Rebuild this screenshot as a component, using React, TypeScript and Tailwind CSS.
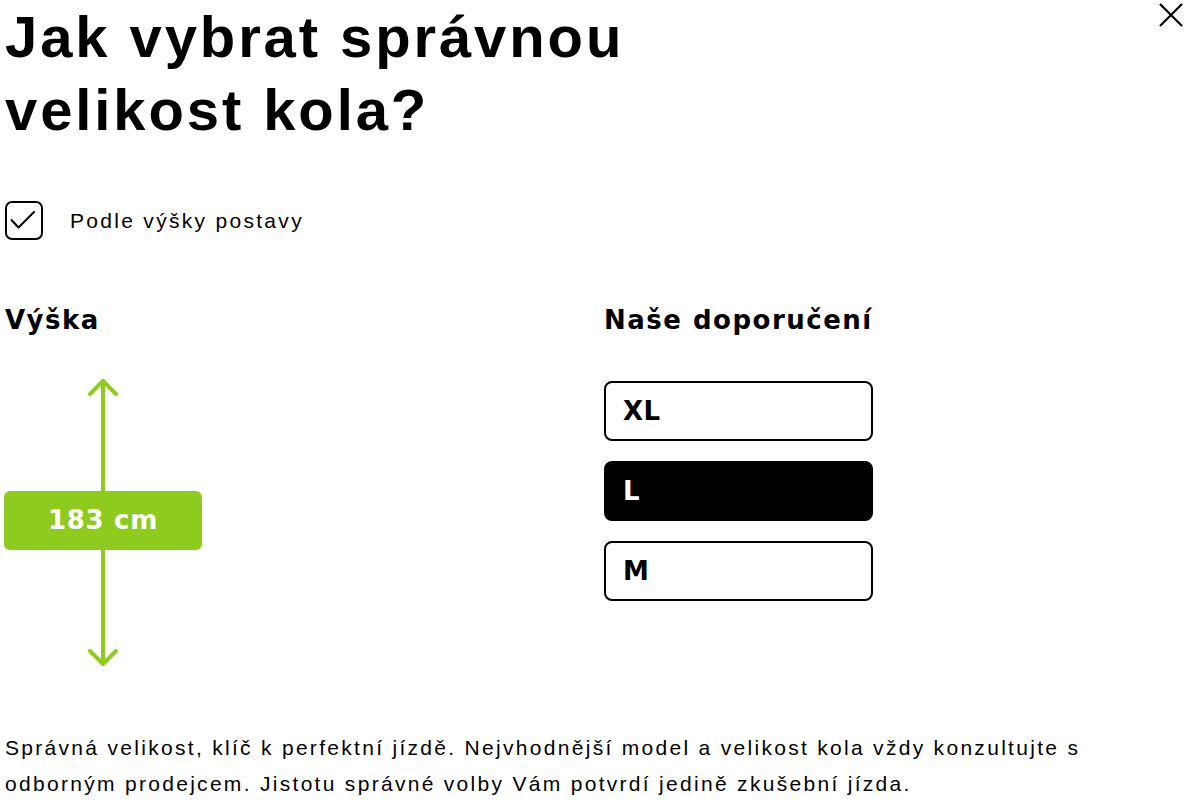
import React from "react";

export default function App() {
  const sizes = [
    { label: "XL", active: false },
    { label: "L", active: true },
    { label: "M", active: false },
  ];
  return (
    <div className="relative w-[1185px] h-[801px] overflow-hidden bg-white text-black font-['Liberation_Sans',sans-serif]">
      <button className="absolute right-[2px] top-[3px] w-[24px] h-[24px]" aria-label="Zavřít">
        <svg viewBox="0 0 24 24" width="24" height="24" fill="none" stroke="#000" strokeWidth="2.2">
          <path d="M1 1 L23 23 M23 1 L1 23" />
        </svg>
      </button>

      <div className="pl-[5px]">
        <h1 className="text-[58px] leading-[73px] font-bold tracking-[2.9px]">
          Jak vybrat správnou
          <br />
          velikost kola?
        </h1>

        <div className="mt-[55px] flex items-center">
          <div className="w-[38px] h-[39px] rounded-[7px] border-2 border-black flex items-center justify-center">
            <svg viewBox="0 0 34 35" width="34" height="35" fill="none" stroke="#000" strokeWidth="2" strokeLinecap="round" strokeLinejoin="round">
              <path d="M4.5 17 L11.5 24.5 L27 9" />
            </svg>
          </div>
          <span className="ml-[27px] text-[21px] tracking-[2.3px]">Podle výšky postavy</span>
        </div>

        <div className="mt-[64px] flex">
          <div className="w-[599px]">
            <h2 className="text-[26px] leading-[32px] font-bold tracking-[1.5px] font-['DejaVu_Sans',sans-serif]">Výška</h2>
            <div className="relative mt-[42px] h-[290px] w-[198px] -ml-[1px]">
              <svg className="absolute left-0 top-0" width="198" height="290" viewBox="0 0 198 290" fill="none" stroke="#8fca1e" strokeWidth="4" strokeLinecap="round" strokeLinejoin="round">
                <path d="M99 3 L99 286" />
                <path d="M86 16 L99 3 L112 16" />
                <path d="M86 273 L99 286 L112 273" />
              </svg>
              <div className="absolute left-0 top-[113px] w-[198px] h-[59px] rounded-[6px] bg-[#8fca1e] flex items-center justify-center">
                <span className="text-white font-bold text-[26px] tracking-[0.7px] font-['DejaVu_Sans',sans-serif]">183 cm</span>
              </div>
            </div>
          </div>
          <div className="w-[269px]">
            <h2 className="text-[26px] leading-[32px] font-bold tracking-[1.5px] font-['DejaVu_Sans',sans-serif]">Naše doporučení</h2>
            <div className="mt-[45px] flex flex-col gap-[20px]">
              {sizes.map((s) => (
                <div
                  key={s.label}
                  className={
                    s.active
                      ? "h-[60px] rounded-[8px] border-2 border-black bg-black text-white flex items-center pl-[17px]"
                      : "h-[60px] rounded-[8px] border-2 border-black bg-white text-black flex items-center pl-[17px]"
                  }
                >
                  <span className="text-[26px] font-bold tracking-[0.5px] font-['DejaVu_Sans',sans-serif]">{s.label}</span>
                </div>
              ))}
            </div>
          </div>
        </div>

        <p className="mt-[62px] text-[21px] leading-[36px] tracking-[2.3px] w-[1150px]">
          Správná velikost, klíč k perfektní jízdě. Nejvhodnější model a velikost kola vždy konzultujte s
          <br />
          odborným prodejcem. Jistotu správné volby Vám potvrdí jedině zkušební jízda.
        </p>
      </div>
    </div>
  );
}
